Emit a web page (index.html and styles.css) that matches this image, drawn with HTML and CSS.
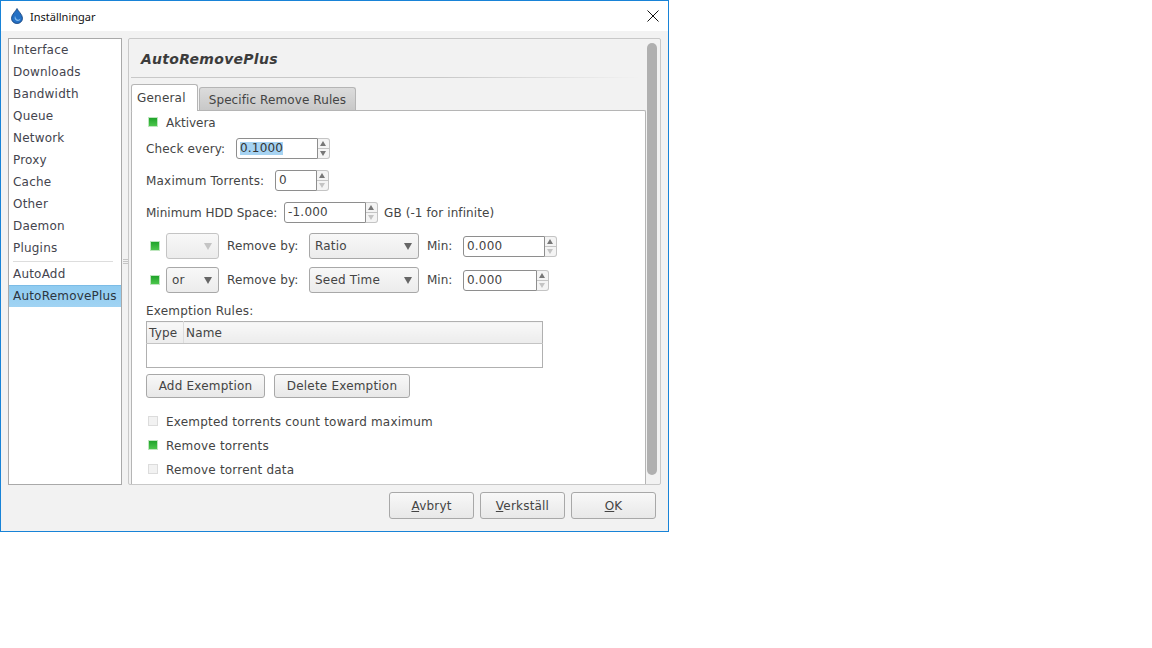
FILE: index.html
```html
<!DOCTYPE html>
<html lang="en">
<head>
    <meta charset="UTF-8">
    <meta name="viewport" content="width=device-width, initial-scale=1.0">
    <title>Inställningar</title>
    <link rel="stylesheet" href="styles.css">
</head>
<body>
    <div class="window">
        <div class="titlebar">
            <svg class="app-icon" width="12" height="16" viewBox="0 0 12 16">
                <path d="M6 0.5 C7 3 11.5 6.5 11.5 10.2 C11.5 13.4 9 15.5 6 15.5 C3 15.5 0.5 13.4 0.5 10.2 C0.5 6.5 5 3 6 0.5 Z" fill="#2470c4" stroke="#123f78" stroke-width="0.8"/>
                <path d="M4 8 C3 10.5 4.2 13 7 13 C8.6 13 9.5 11.8 9.3 10.6 C8.6 11.8 6.6 12 5.6 11 C4.8 10.2 4.6 9.2 4 8 Z" fill="#7db6ea"/>
            </svg>
            <span class="title-text">Inställningar</span>
            <svg class="close-icon" width="12" height="12" viewBox="0 0 12 12">
                <path d="M0.5 0.5 L11.5 11.5 M11.5 0.5 L0.5 11.5" stroke="#111" stroke-width="1" fill="none"/>
            </svg>
        </div>

        <div class="content">
            <ul class="sidebar">
                <li>Interface</li>
                <li>Downloads</li>
                <li>Bandwidth</li>
                <li>Queue</li>
                <li>Network</li>
                <li>Proxy</li>
                <li>Cache</li>
                <li>Other</li>
                <li>Daemon</li>
                <li>Plugins</li>
                <li class="sidebar-sep"></li>
                <li>AutoAdd</li>
                <li class="selected">AutoRemovePlus</li>
            </ul>

            <div class="grip"><span></span><span></span><span></span></div>

            <div class="panel">
                <div class="panel-main">
                    <h2 class="plugin-title">AutoRemovePlus</h2>
                    <div class="title-rule"></div>

                    <div class="tabs">
                        <div class="tab active">General</div>
                        <div class="tab">Specific Remove Rules</div>
                    </div>

                    <div class="tab-page">
                        <div class="check-row first">
                            <span class="check on"></span>
                            <span class="check-text tight">Aktivera</span>
                        </div>

                        <div class="row row-check-every">
                            <label class="lbl-check">Check every:</label>
                            <div class="spin w-94">
                                <div class="spin-input"><span class="sel">0.1000</span></div>
                                <div class="spin-btns">
                                    <div class="spin-up"></div>
                                    <div class="spin-down"></div>
                                </div>
                            </div>
                        </div>

                        <div class="row row-spaced">
                            <label class="lbl-max">Maximum Torrents:</label>
                            <div class="spin w-54">
                                <div class="spin-input">0</div>
                                <div class="spin-btns">
                                    <div class="spin-up"></div>
                                    <div class="spin-down off"></div>
                                </div>
                            </div>
                        </div>

                        <div class="row row-spaced">
                            <label class="lbl-hdd">Minimum HDD Space:</label>
                            <div class="spin w-94">
                                <div class="spin-input">-1.000</div>
                                <div class="spin-btns">
                                    <div class="spin-up"></div>
                                    <div class="spin-down off"></div>
                                </div>
                            </div>
                            <span class="unit">GB (-1 for infinite)</span>
                        </div>

                        <div class="rule-row rule-one">
                            <span class="check on"></span>
                            <div class="combo combo-small disabled"><span></span><i class="arrow"></i></div>
                            <span class="rule-label">Remove by:</span>
                            <div class="combo combo-wide"><span>Ratio</span><i class="arrow"></i></div>
                            <span class="rule-min">Min:</span>
                            <div class="spin w-94">
                                <div class="spin-input">0.000</div>
                                <div class="spin-btns">
                                    <div class="spin-up"></div>
                                    <div class="spin-down off"></div>
                                </div>
                            </div>
                        </div>

                        <div class="rule-row rule-two">
                            <span class="check on"></span>
                            <div class="combo combo-small"><span>or</span><i class="arrow"></i></div>
                            <span class="rule-label">Remove by:</span>
                            <div class="combo combo-wide"><span>Seed Time</span><i class="arrow"></i></div>
                            <span class="rule-min">Min:</span>
                            <div class="spin w-86">
                                <div class="spin-input">0.000</div>
                                <div class="spin-btns">
                                    <div class="spin-up"></div>
                                    <div class="spin-down off"></div>
                                </div>
                            </div>
                        </div>

                        <div class="rules-label">Exemption Rules:</div>
                        <table class="rules-table">
                            <thead>
                                <tr>
                                    <th class="col-type">Type</th>
                                    <th>Name</th>
                                </tr>
                            </thead>
                            <tbody>
                                <tr><td colspan="2"></td></tr>
                            </tbody>
                        </table>

                        <div class="rules-buttons">
                            <button class="btn btn-add">Add Exemption</button>
                            <button class="btn btn-del">Delete Exemption</button>
                        </div>

                        <div class="check-row after-buttons">
                            <span class="check"></span>
                            <span class="check-text">Exempted torrents count toward maximum</span>
                        </div>
                        <div class="check-row next">
                            <span class="check on"></span>
                            <span class="check-text">Remove torrents</span>
                        </div>
                        <div class="check-row next">
                            <span class="check"></span>
                            <span class="check-text">Remove torrent data</span>
                        </div>
                    </div>
                </div>

                <div class="scrollbar"><div class="thumb"></div></div>
            </div>
        </div>

        <div class="footer">
            <button class="btn btn-footer"><u>A</u>vbryt</button>
            <button class="btn btn-footer"><u>V</u>erkställ</button>
            <button class="btn btn-footer"><u>O</u>K</button>
        </div>
    </div>
</body>
</html>
```

FILE: styles.css
```css
* {
    box-sizing: border-box;
}

body {
    margin: 0;
    background-color: #fff;
    font-family: "DejaVu Sans", sans-serif;
    font-size: 12px;
    letter-spacing: 0.2px;
    color: #444;
}

.window {
    width: 669px;
    height: 532px;
    border: 1px solid #1883d7;
    background-color: #f2f2f2;
    display: flex;
    flex-direction: column;
}

/* title bar */
.titlebar {
    height: 30px;
    background-color: #fff;
    display: flex;
    align-items: center;
    padding: 0 9px 0 10px;
    flex-shrink: 0;
}

.app-icon {
    margin-right: 7px;
}

.title-text {
    font-family: "Noto Sans", sans-serif;
    font-size: 11px;
    letter-spacing: 0;
    color: #111;
    flex: 1;
}

/* sidebar + panel */
.content {
    display: flex;
    padding: 7px 7px 0 7px;
    height: 454px;
    flex-shrink: 0;
}

.sidebar {
    list-style: none;
    margin: 0;
    padding: 0;
    width: 114px;
    height: 447px;
    background-color: #fff;
    border: 1px solid #a9a9a9;
    flex-shrink: 0;
}

.sidebar li {
    height: 22px;
    line-height: 23px;
    padding-left: 4px;
    color: #44444e;
}

.sidebar li.sidebar-sep {
    height: 2px;
    margin: 2px 8px 0 4px;
    border-top: 1px solid #ddd;
}

.sidebar li.selected {
    background: linear-gradient(#8fcbf0, #a0d3f3);
    border-top: 1px solid #7cbce6;
    line-height: 21px;
    color: #2b3540;
}

.grip {
    width: 6px;
    flex-shrink: 0;
    display: flex;
    flex-direction: column;
    justify-content: center;
    align-items: center;
    gap: 1px;
}

.grip span {
    width: 5px;
    height: 1px;
    background-color: #c4c4c4;
}

.panel {
    width: 533px;
    height: 447px;
    border: 1px solid #c8c8c8;
    border-radius: 2px;
    display: flex;
    overflow: hidden;
}

.panel-main {
    width: 517px;
    padding-left: 2px;
    flex-shrink: 0;
}

.plugin-title {
    margin: 0;
    height: 38px;
    line-height: 40px;
    padding-left: 10px;
    font-size: 14px;
    font-weight: bold;
    font-style: italic;
    letter-spacing: 0.28px;
    color: #3c3c3c;
}

.title-rule {
    height: 1px;
    margin-right: 6px;
    background: linear-gradient(to right, #c8c8c8 60%, #f2f2f2);
}

/* tabs */
.tabs {
    display: flex;
    align-items: flex-end;
    height: 27px;
    margin-top: 6px;
    position: relative;
    z-index: 1;
}

.tab {
    height: 23px;
    line-height: 24px;
    padding: 0 9px;
    border: 1px solid #b5b5b5;
    border-bottom: none;
    border-radius: 3px 3px 0 0;
    background: linear-gradient(#dcdcdc, #c8c8c8);
    margin-left: 1px;
    margin-bottom: 1px;
    letter-spacing: 0.1px;
}

.tab.active {
    height: 27px;
    margin-left: 0;
    margin-bottom: 0;
    padding: 0 11px 0 5px;
    line-height: 26px;
    background: #fff;
    letter-spacing: 0.2px;
}

.tab-page {
    margin-top: -1px;
    height: 380px;
    background-color: #fff;
    border: 1px solid #b5b5b5;
    border-bottom: none;
    border-radius: 2px 2px 0 0;
    padding-left: 14px;
}

/* form rows */
.row {
    display: flex;
    align-items: center;
    height: 21px;
}

.row-check-every {
    margin-top: 6px;
}

.row-spaced {
    margin-top: 11px;
}

.lbl-check {
    width: 90px;
    letter-spacing: 0.12px;
}

.lbl-max {
    width: 129px;
}

.lbl-hdd {
    width: 138px;
    letter-spacing: 0;
}

.unit {
    margin-left: 6px;
    letter-spacing: 0.1px;
}

.check-row {
    display: flex;
    align-items: center;
    height: 20px;
    padding-left: 2px;
}

.check-row.first {
    margin-top: 1px;
}

.check-row.after-buttons {
    margin-top: 13px;
}

.check-row.next {
    margin-top: 4px;
}

.check-text {
    padding-top: 2px;
}

.check-text.tight {
    letter-spacing: -0.05px;
}

.check {
    width: 10px;
    height: 10px;
    margin-right: 8px;
    background-color: #f2f2f2;
    border: 1px solid #dcdcdc;
    flex-shrink: 0;
}

.check.on {
    background: linear-gradient(#1fa32a, #4cc64c);
    border-color: #bfe6bf;
}

/* spin buttons */
.spin {
    display: flex;
    height: 21px;
    flex-shrink: 0;
}

.w-94 {
    width: 94px;
}

.w-86 {
    width: 86px;
}

.w-54 {
    width: 54px;
}

.spin-input {
    flex: 1;
    border: 1px solid #8e8e8e;
    border-radius: 3px 0 0 3px;
    background-color: #fff;
    line-height: 19px;
    padding-left: 3px;
    color: #444;
}

.sel {
    background-color: #a6d3f2;
    display: inline-block;
    height: 13px;
    line-height: 13px;
    color: #333;
}

.spin-btns {
    width: 12px;
    display: flex;
    flex-direction: column;
    flex-shrink: 0;
}

.spin-up,
.spin-down {
    height: 11px;
    border: 1px solid #c4c4c4;
    border-left: none;
    background-color: #f4f4f4;
    position: relative;
}

.spin-up {
    border-radius: 0 3px 0 0;
}

.spin-down {
    margin-top: -1px;
    border-radius: 0 0 3px 0;
}

.spin-up::after,
.spin-down::after {
    content: "";
    position: absolute;
    left: 2px;
    top: 2px;
    border-left: 3.5px solid transparent;
    border-right: 3.5px solid transparent;
}

.spin-up::after {
    border-bottom: 5px solid #777;
}

.spin-down::after {
    border-top: 5px solid #777;
}

.spin-down.off::after {
    border-top-color: #c4c4c4;
}

/* the two remove rule rows */
.rule-row {
    display: flex;
    align-items: center;
    height: 26px;
    padding-left: 4px;
}

.rule-one {
    margin-top: 10px;
}

.rule-two {
    margin-top: 8px;
}

.rule-row .check {
    margin-right: 6px;
}

.rule-label {
    width: 82px;
    margin-left: 8px;
    letter-spacing: 0.1px;
}

.rule-min {
    width: 36px;
    margin-left: 8px;
    letter-spacing: 0;
}

.combo {
    height: 26px;
    border: 1px solid #a8a8a8;
    border-radius: 3px;
    background: linear-gradient(#f8f8f8, #ececec);
    display: flex;
    align-items: center;
    justify-content: space-between;
    padding: 0 6px 0 5px;
    flex-shrink: 0;
}

.combo-small {
    width: 53px;
}

.combo-wide {
    width: 110px;
}

.arrow {
    width: 0;
    height: 0;
    border-left: 4px solid transparent;
    border-right: 4px solid transparent;
    border-top: 7px solid #666;
}

.combo.disabled {
    border-color: #c4c4c4;
}

.combo.disabled .arrow {
    border-top-color: #c4c4c4;
}

/* exemption rules */
.rules-label {
    height: 16px;
    line-height: 18px;
    margin-top: 9px;
}

.rules-table {
    width: 397px;
    height: 47px;
    margin-top: 3px;
    border-collapse: collapse;
    border: 1px solid #b0b0b0;
}

.rules-table th {
    height: 22px;
    padding: 0 0 0 2px;
    font-weight: normal;
    text-align: left;
    background: linear-gradient(#f8f8f8, #ececec);
    border-bottom: 1px solid #c4c4c4;
}

.rules-table .col-type {
    width: 37px;
    border-right: 1px solid #dcdcdc;
}

.rules-table td {
    height: 23px;
    padding: 0;
}

.rules-buttons {
    display: flex;
    margin-top: 6px;
    gap: 9px;
}

.btn {
    height: 24px;
    padding: 0;
    border: 1px solid #a8a8a8;
    border-radius: 3px;
    background: linear-gradient(#f8f8f8, #e8e8e8);
    font-family: "DejaVu Sans", sans-serif;
    font-size: 12px;
    letter-spacing: 0.2px;
    color: #444;
    text-align: center;
}

.btn-add {
    width: 119px;
}

.btn-del {
    width: 136px;
}

/* scrollbar */
.scrollbar {
    width: 14px;
    padding: 4px 0 0 1px;
    flex-shrink: 0;
}

.thumb {
    width: 10px;
    height: 432px;
    background-color: #b0b0b0;
    border-radius: 5px;
}

/* bottom buttons */
.footer {
    display: flex;
    justify-content: flex-end;
    gap: 6px;
    padding: 7px 12px 0 0;
}

.btn-footer {
    width: 85px;
    height: 27px;
}
```
